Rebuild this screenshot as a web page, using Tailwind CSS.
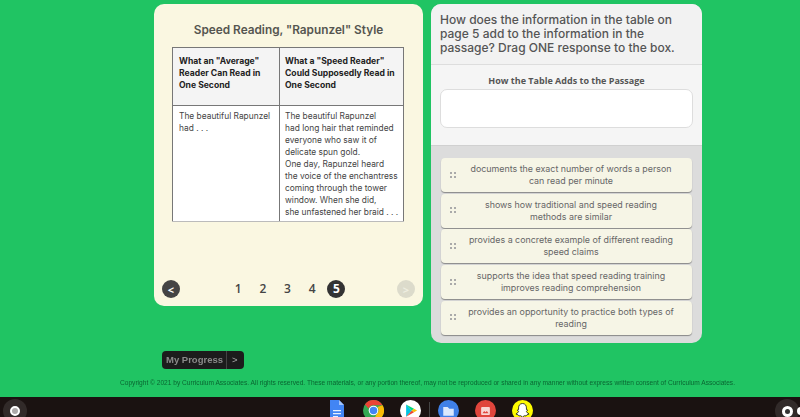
<!DOCTYPE html>
<html lang="en">
<head>
  <meta charset="UTF-8" />
  <title>Speed Reading, "Rapunzel" Style</title>
  <script src="https://cdn.jsdelivr.net/npm/@tailwindcss/browser@4"></script>
</head>
<body class="w-[800px] h-[417px] overflow-hidden bg-[#20c463] font-['Inter','Liberation_Sans',sans-serif] flex flex-col">
  <main class="h-[397px] flex flex-col pt-1 blur-[0.3px]">
    <div class="h-[339px] flex items-start pl-[154px] gap-2">
      <!-- passage -->
      <section class="w-[269px] h-[302px] rounded-[10px] bg-[#faf7e1] flex flex-col px-[18px]">
        <h1 class="mt-[19px] h-[15px] leading-[15px] text-center text-[11.8px] font-semibold text-[#555550]">Speed Reading, "Rapunzel" Style</h1>
        <table class="mt-[9px] w-[232px] h-[175px] table-fixed border-collapse text-[8.6px] leading-[12px] text-[#333]">
          <thead>
            <tr class="h-[58px] bg-[#f4f4f4] align-top font-bold text-[#222]">
              <th class="w-[107px] border border-[#777] pl-[6px] pr-1 pt-[7px] text-left whitespace-nowrap">What an "Average"<br />Reader Can Read in<br />One Second</th>
              <th class="border border-[#777] pl-[5px] pr-1 pt-[7px] text-left whitespace-nowrap">What a "Speed Reader"<br />Could Supposedly Read in<br />One Second</th>
            </tr>
          </thead>
          <tbody>
            <tr class="bg-white align-top text-[#444] text-[8.4px]">
              <td class="border border-[#777] border-b-[#bbb] pl-[6px] pt-[4px] whitespace-nowrap">The beautiful Rapunzel<br />had . . .</td>
              <td class="border border-[#777] border-b-[#bbb] pl-[5px] pt-[4px] whitespace-nowrap">The beautiful Rapunzel<br />had long hair that reminded<br />everyone who saw it of<br />delicate spun gold.<br />One day, Rapunzel heard<br />the voice of the enchantress<br />coming through the tower<br />window. When she did,<br />she unfastened her braid . . .</td>
            </tr>
          </tbody>
        </table>
        <nav class="mt-[58px] -mx-[10px] flex items-center h-[18px] font-['Open_Sans',sans-serif]">
          <button class="size-[18px] rounded-full bg-[#444] text-white text-[11px] font-bold leading-none">&lt;</button>
          <div class="ml-[46px] flex text-[12px] font-semibold text-[#444] text-center">
            <span class="w-[24.6px]">1</span>
            <span class="w-[24.6px]">2</span>
            <span class="w-[24.6px]">3</span>
            <span class="w-[24.6px]">4</span>
            <span class="ml-[3px] size-[18px] rounded-full bg-[#333] text-white font-bold leading-[18px]">5</span>
          </div>
          <button class="ml-auto size-[18px] rounded-full bg-[#dcdbcb] text-[#eeeee0] text-[11px] font-bold leading-none">&gt;</button>
        </nav>
      </section>

      <!-- question -->
      <section class="w-[271px] h-[339px] rounded-[10px] overflow-hidden bg-[#dcdcdc] flex flex-col">
        <div class="h-[61px] bg-[#f2f2f2] border-b border-[#ddd] px-[9px] pt-[9px] text-[12px] leading-[14px] font-medium text-[#555] whitespace-nowrap">How does the information in the table on<br />page 5 add to the information in the<br />passage? Drag ONE response to the box.</div>
        <div class="h-[81px] bg-[#f5f5f5] border-b border-[#d0d0d0] px-[9px] pt-[10px]">
          <h2 class="h-[11px] leading-[11px] text-center text-[9px] font-bold text-[#555] font-['Open_Sans',sans-serif]">How the Table Adds to the Passage</h2>
          <div class="mt-[3px] w-[253px] h-[39px] bg-white border border-[#ddd] rounded-[7px]"></div>
        </div>
        <ul class="pt-3 pl-[10px] pr-[10px] flex flex-col gap-[1.7px] text-[8.9px] leading-[12px] text-[#666] text-center">
          <li class="h-[34px] rounded-[4px] bg-[#f6f5e6] shadow-[0_1px_1px_#888] flex items-center pl-[9px] pr-[11px]">
            <svg class="w-[7px] h-[7px] shrink-0" viewBox="0 0 7 7" fill="#aaa"><rect x="0" y="0" width="2" height="2"/><rect x="4" y="0" width="2" height="2"/><rect x="0" y="4" width="2" height="2"/><rect x="4" y="4" width="2" height="2"/></svg>
            <span class="flex-1 pl-1 whitespace-nowrap">documents the exact number of words a person<br />can read per minute</span>
          </li>
          <li class="h-[34px] rounded-[4px] bg-[#f6f5e6] shadow-[0_1px_1px_#888] flex items-center pl-[9px] pr-[11px]">
            <svg class="w-[7px] h-[7px] shrink-0" viewBox="0 0 7 7" fill="#aaa"><rect x="0" y="0" width="2" height="2"/><rect x="4" y="0" width="2" height="2"/><rect x="0" y="4" width="2" height="2"/><rect x="4" y="4" width="2" height="2"/></svg>
            <span class="flex-1 pl-1 whitespace-nowrap">shows how traditional and speed reading<br />methods are similar</span>
          </li>
          <li class="h-[34px] rounded-[4px] bg-[#f6f5e6] shadow-[0_1px_1px_#888] flex items-center pl-[9px] pr-[11px]">
            <svg class="w-[7px] h-[7px] shrink-0" viewBox="0 0 7 7" fill="#aaa"><rect x="0" y="0" width="2" height="2"/><rect x="4" y="0" width="2" height="2"/><rect x="0" y="4" width="2" height="2"/><rect x="4" y="4" width="2" height="2"/></svg>
            <span class="flex-1 pl-1 whitespace-nowrap">provides a concrete example of different reading<br />speed claims</span>
          </li>
          <li class="h-[34px] rounded-[4px] bg-[#f6f5e6] shadow-[0_1px_1px_#888] flex items-center pl-[9px] pr-[11px]">
            <svg class="w-[7px] h-[7px] shrink-0" viewBox="0 0 7 7" fill="#aaa"><rect x="0" y="0" width="2" height="2"/><rect x="4" y="0" width="2" height="2"/><rect x="0" y="4" width="2" height="2"/><rect x="4" y="4" width="2" height="2"/></svg>
            <span class="flex-1 pl-1 whitespace-nowrap">supports the idea that speed reading training<br />improves reading comprehension</span>
          </li>
          <li class="h-[34px] rounded-[4px] bg-[#f6f5e6] shadow-[0_1px_1px_#888] flex items-center pl-[9px] pr-[11px]">
            <svg class="w-[7px] h-[7px] shrink-0" viewBox="0 0 7 7" fill="#aaa"><rect x="0" y="0" width="2" height="2"/><rect x="4" y="0" width="2" height="2"/><rect x="0" y="4" width="2" height="2"/><rect x="4" y="4" width="2" height="2"/></svg>
            <span class="flex-1 pl-1 whitespace-nowrap">provides an opportunity to practice both types of<br />reading</span>
          </li>
        </ul>
      </section>
    </div>

    <div class="mt-2 ml-[162px] w-[82px] h-[18px] rounded-[4px] bg-[#1c1c1c] flex items-center text-[9.5px] font-bold font-['Liberation_Sans',sans-serif] text-[#8a8a8a] whitespace-nowrap">
      <span class="w-[65px] pl-1 border-r border-[#444] leading-[18px]">My Progress</span>
      <span class="pl-[5px] text-[#aaa] font-normal">&gt;</span>
    </div>
    <p class="mt-[9px] pl-[55px] text-center text-[6.6px] leading-[10px] text-[#0a6632] font-['Liberation_Sans',sans-serif] whitespace-nowrap">Copyright © 2021 by Curriculum Associates. All rights reserved. These materials, or any portion thereof, may not be reproduced or shared in any manner without express written consent of Curriculum Associates.</p>
  </main>

  <!-- shelf -->
  <footer class="relative h-5 bg-[#1a1211] overflow-hidden">
    <span class="absolute left-[3px] top-[2px] size-6 rounded-full bg-white/10"></span>
    <span class="absolute left-[10px] top-[9px] size-[10px] rounded-full border-2 border-white bg-white/60"></span>
    <div class="absolute left-[326px] top-[3px] flex gap-[16px] items-start">
      <!-- docs -->
      <svg class="size-[21px]" viewBox="0 0 21 21"><path d="M4 0h9l5 5v16H4z" fill="#4285f4"/><path d="M13 0l5 5h-5z" fill="#a1c2fa"/><path d="M7 10h8v1.2H7zM7 13h8v1.2H7zM7 16h5v1.2H7z" fill="#e8f0fe"/></svg>
      <!-- chrome -->
      <svg class="size-[21px]" viewBox="0 0 24 24"><circle cx="12" cy="12" r="12" fill="#34a853"/><path d="M12 0a12 12 0 0 1 10.4 6H12a6 6 0 0 0-5.6 3.8L2.2 5A12 12 0 0 1 12 0z" fill="#ea4335"/><path d="M22.4 6A12 12 0 0 1 11 24l5.2-8.500A6 6 0 0 0 16.500 8z" fill="#fbbc05"/><circle cx="12" cy="12" r="5.500" fill="#fff"/><circle cx="12" cy="12" r="4.300" fill="#4285f4"/></svg>
      <!-- play store -->
      <svg class="size-[21px]" viewBox="0 0 24 24"><circle cx="12" cy="12" r="12" fill="#fff"/><path d="M7 5l6.500 7L7 19z" fill="#00c3e3"/><path d="M7 5l9 5-2.500 2z" fill="#00d775"/><path d="M7 19l9-5-2.500-2z" fill="#ea4335"/><path d="M16 10l3.500 2-3.500 2-2.500-2z" fill="#fbbc05"/></svg>
      <span class="-mx-[8px] mt-[2px] w-px h-4 bg-[#444]"></span>
      <!-- files -->
      <svg class="size-[21px]" viewBox="0 0 24 24"><circle cx="12" cy="12" r="12" fill="#3f80e8"/><path d="M6 8h5l2 2h5v8H6z" fill="#dbe8fd"/></svg>
      <!-- gallery -->
      <svg class="size-[21px]" viewBox="0 0 24 24"><circle cx="12" cy="12" r="12" fill="#e0453c"/><rect x="7" y="8" width="10" height="9" rx="1" fill="#f8d7d4"/><path d="M8.500 15l2-2.500 1.500 1.500 1.500-1.500 2 2.500z" fill="#e0453c"/></svg>
      <!-- snapchat -->
      <svg class="size-[21px]" viewBox="0 0 24 24"><circle cx="12" cy="12" r="12" fill="#fffc00"/><path d="M12 4c3 0 4.500 2.300 4.500 5v2l1.500.5-1.500 1.500c.5 1.500 2 2.500 3 3l-2.500 1-1 1.200-2-.2-2 1.500-2-1.500-2 .2-1-1.200-2.500-1c1-.5 2.500-1.500 3-3L6 11.500 7.500 11V9c0-2.700 1.500-5 4.500-5z" fill="#fff" stroke="#222" stroke-width="1"/></svg>
    </div>
    <span class="absolute left-[775px] top-[2px] size-6 rounded-full bg-white/10"></span>
    <span class="absolute left-[782px] top-[9px] size-[11px] rounded-full bg-white"></span>
    <span class="absolute left-[785px] top-[12px] size-[5px] rounded-full bg-[#333]"></span>
    <span class="absolute left-[797px] top-[10px] size-[8px] rounded-full bg-white"></span>
  </footer>
</body>
</html>
